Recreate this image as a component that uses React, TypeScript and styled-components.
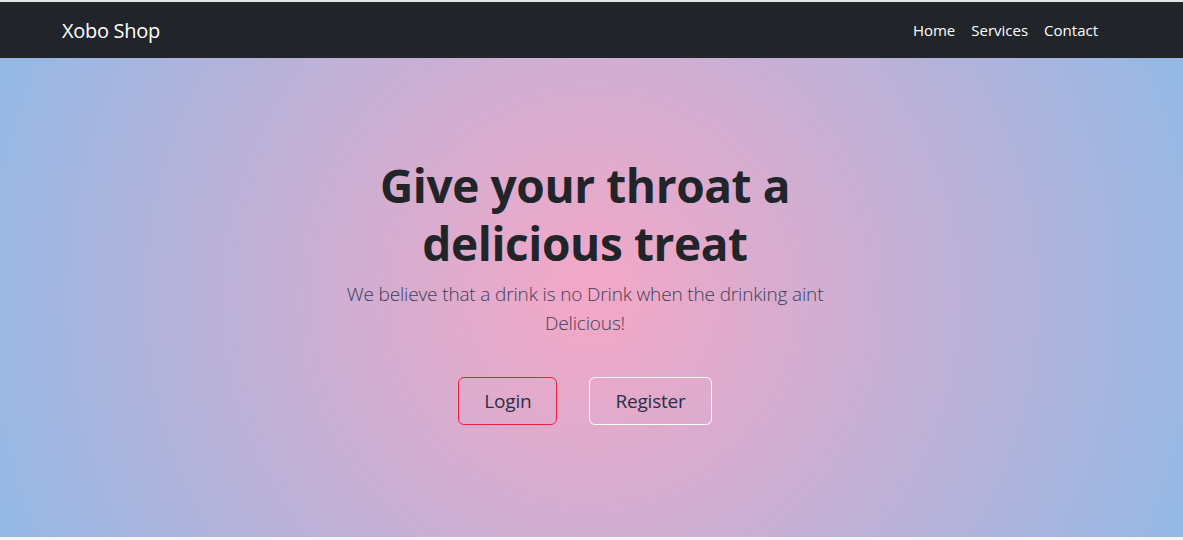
import React from "react";
import styled, { createGlobalStyle } from "styled-components";

const Global = createGlobalStyle`
  html, body { margin: 0; padding: 0; }
  body {
    background: #f4f6fb;
    font-family: "Open Sans", "Noto Sans", "Liberation Sans", sans-serif;
    color: #212529;
  }
`;

const TopEdge = styled.div`
  height: 2px;
  background: #e4e4e4;
`;

const Nav = styled.nav`
  height: 56px;
  background: #212529;
  display: flex;
  align-items: center;
  justify-content: space-between;
  padding: 0 85px 0 62px;
`;

const Brand = styled.a`
  color: #fff;
  font-size: 20px;
  text-decoration: none;
  letter-spacing: -0.3px;
`;

const Links = styled.ul`
  display: flex;
  list-style: none;
  margin: 0;
  padding: 0;
  gap: 0;
`;

const LinkItem = styled.li`
  a {
    color: #fff;
    text-decoration: none;
    font-size: 15px;
    padding: 0 8px;
    letter-spacing: 0;
  }
  &:last-child a { padding-right: 0; }
`;

const Hero = styled.section`
  height: 479px;
  background: radial-gradient(circle at 50% 50%, #f5a7c6 0%, #93b9e5 100%);
  display: flex;
  flex-direction: column;
  align-items: center;
  padding-top: 98px;
  box-sizing: border-box;
`;

const Column = styled.div`
  width: 500px;
  margin-right: 13px;
  text-align: center;
`;

const Title = styled.h1`
  margin: 0;
  font-size: 46px;
  font-weight: 700;
  line-height: 58px;
  letter-spacing: -0.4px;
  color: #212529;
`;

const Lead = styled.p`
  margin: 8px auto 0;
  width: 490px;
  font-size: 19px;
  font-weight: 300;
  line-height: 29px;
  color: #3b3f58;
  letter-spacing: -0.15px;
`;

const Buttons = styled.div`
  display: flex;
  justify-content: center;
  gap: 32px;
  margin-top: 39px;
`;

const Button = styled.button<{ $border: string }>`
  height: 48px;
  padding: 0 25px;
  background: transparent;
  border: 1px solid ${(p) => p.$border};
  border-radius: 6px;
  font-family: inherit;
  font-size: 19px;
  color: #2a2f45;
  letter-spacing: -0.2px;
  cursor: pointer;
`;

export default function App() {
  return (
    <>
      <Global />
      <TopEdge />
      <Nav>
        <Brand href="#">Xobo Shop</Brand>
        <Links>
          <LinkItem><a href="#">Home</a></LinkItem>
          <LinkItem><a href="#">Services</a></LinkItem>
          <LinkItem><a href="#">Contact</a></LinkItem>
        </Links>
      </Nav>
      <Hero>
        <Column>
          <Title>Give your throat a delicious treat</Title>
          <Lead>We believe that a drink is no Drink when the drinking aint Delicious!</Lead>
          <Buttons>
            <Button $border="#e8213f">Login</Button>
            <Button $border="#ffffff">Register</Button>
          </Buttons>
        </Column>
      </Hero>
    </>
  );
}
